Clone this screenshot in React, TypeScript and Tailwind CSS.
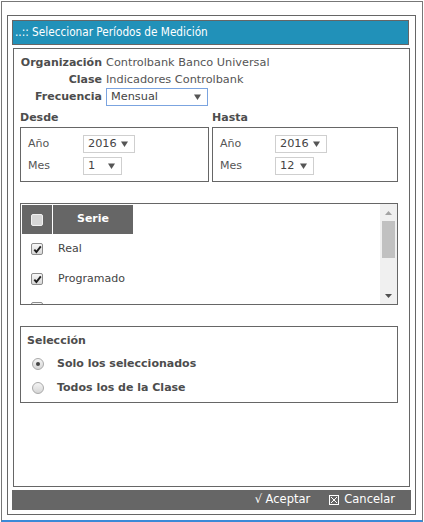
import React from 'react'

function Arrow() {
  return (
    <svg width="7" height="6" viewBox="0 0 7 6">
      <path d="M0 0.5 L7 0.5 L3.5 6 Z" fill="#555" />
    </svg>
  )
}

function Sel({ value, w }: { value: string; w: string }) {
  return (
    <div className={`${w} h-[18px] border border-[#cfcfcf] bg-white flex items-center justify-between pl-[4px] pr-[6px] text-[11.3px] text-[#444]`}>
      <span>{value}</span>
      <Arrow />
    </div>
  )
}

function Check({ checked, header }: { checked?: boolean; header?: boolean }) {
  if (header) {
    return <div className="w-[12px] h-[12px] rounded-[2px] border border-[#f0f0f0] bg-[#d6d6d6]" />
  }
  return (
    <div className="w-[12px] h-[12px] rounded-[2px] border border-[#8c8c8c] bg-gradient-to-b from-[#f7f7f7] to-[#d8d8d8] flex items-center justify-center">
      {checked && (
        <svg width="9" height="9" viewBox="0 0 9 9">
          <path d="M1.3 4.6 L3.4 7 L7.8 1.4" stroke="#1e1e1e" strokeWidth="1.9" fill="none" />
        </svg>
      )}
    </div>
  )
}

function Radio({ on }: { on?: boolean }) {
  return (
    <div className="w-[12px] h-[12px] rounded-full border border-[#a9a9a9] bg-gradient-to-b from-[#f4f4f4] to-[#d6d6d6] flex items-center justify-center">
      {on && <div className="w-[4px] h-[4px] rounded-full bg-[#444]" />}
    </div>
  )
}

function RangeBox({ label, w, year, month }: { label: string; w: string; year: string; month: string }) {
  return (
    <div className={`${w} flex flex-col`}>
      <div className="h-[17px] leading-[17px] font-bold text-[#4d4d4d]">{label}</div>
      <div className="mt-px h-[55px] border border-[#666] pt-[7px]">
        <div className="flex items-center">
          <span className="w-[62px] pl-[7px] text-[#555]">Año</span>
          <Sel value={year} w="w-[52px]" />
        </div>
        <div className="flex items-center mt-[4px]">
          <span className="w-[62px] pl-[7px] text-[#555]">Mes</span>
          <Sel value={month} w="w-[39px]" />
        </div>
      </div>
    </div>
  )
}

export default function App() {
  return (
    <div className="w-[424px] h-[522px] bg-white pt-px pl-px font-['DejaVu_Sans',Verdana,sans-serif] text-[11px]">
      <div className="w-[422px] h-[521px] border border-[#777] border-b-2 border-b-[#3a8ad8] pl-[5px] pt-[13px]">
        <div className="w-[409px] h-[500px] border border-[#666] pl-[4px] pt-[4px] flex flex-col">
          {/* titulo */}
          <div className="w-[397px] h-[25px] shrink-0 bg-[#2191b9] border border-[#666] pl-[2px] flex items-center text-white text-[11.7px] font-['DejaVu_Sans_Condensed','DejaVu_Sans',sans-serif] [font-stretch:condensed]">
            ..:: Seleccionar Períodos de Medición
          </div>

          {/* contenido */}
          <div className="ml-px mt-[3px] w-[397px] h-[439px] shrink-0 border border-[#666]">
            <div className="mt-[5px] grid grid-cols-[88px_1fr] gap-x-[4px]">
              <div className="h-[17px] leading-[17px] text-right font-bold text-[#4d4d4d]">Organización</div>
              <div className="h-[17px] leading-[17px] text-[11.3px] text-[#555]">Controlbank Banco Universal</div>
              <div className="h-[17px] leading-[17px] text-right font-bold text-[#4d4d4d]">Clase</div>
              <div className="h-[17px] leading-[17px] text-[11.3px] text-[#555]">Indicadores Controlbank</div>
              <div className="h-[18px] leading-[18px] text-right font-bold text-[#4d4d4d]">Frecuencia</div>
              <div className="w-[102px] h-[18px] border border-[#7ba4e0] flex items-center justify-between pl-[4px] pr-[6px] text-[11.3px] text-[#444]">
                <span>Mensual</span>
                <Arrow />
              </div>
            </div>

            <div className="mt-[3px] pl-[6px] flex gap-[3px]">
              <RangeBox label="Desde" w="w-[189px]" year="2016" month="1" />
              <RangeBox label="Hasta" w="w-[186px]" year="2016" month="12" />
            </div>

            {/* grilla de series */}
            <div className="mt-[21px] ml-[6px] w-[378px] h-[102px] border border-[#666] flex overflow-hidden">
              <div className="flex-1 overflow-hidden">
                <div className="mt-px ml-px flex gap-px">
                  <div className="w-[30px] h-[29px] bg-[#666] flex items-center justify-center">
                    <Check header />
                  </div>
                  <div className="w-[80px] h-[29px] bg-[#666] flex items-center justify-center font-bold text-white">
                    Serie
                  </div>
                </div>
                <div className="h-[30px] flex items-center pl-[10px]">
                  <Check checked />
                  <span className="ml-[15px] text-[#444]">Real</span>
                </div>
                <div className="h-[30px] flex items-center pl-[10px]">
                  <Check checked />
                  <span className="ml-[15px] text-[#444]">Programado</span>
                </div>
                <div className="h-[30px] flex items-start pl-[10px] pt-[8px]">
                  <Check />
                </div>
              </div>
              <div className="w-[17px] h-full bg-[#f0f0f0] flex flex-col items-center">
                <div className="h-[17px] flex items-center justify-center">
                  <svg width="7" height="4" viewBox="0 0 7 4"><path d="M0 4 L3.5 0 L7 4 Z" fill="#a3a3a3" /></svg>
                </div>
                <div className="w-[13px] h-[37px] bg-[#c1c1c1]" />
                <div className="flex-1" />
                <div className="h-[17px] flex items-center justify-center">
                  <svg width="7" height="4" viewBox="0 0 7 4"><path d="M0 0 L7 0 L3.5 4 Z" fill="#505050" /></svg>
                </div>
              </div>
            </div>

            {/* seleccion */}
            <div className="mt-[21px] ml-[6px] w-[378px] h-[77px] border border-[#666] pt-[5px]">
              <div className="h-[17px] leading-[17px] pl-[6px] font-bold text-[#4d4d4d]">Selección</div>
              <div className="mt-[3px] h-[24px] flex items-center pl-[11px]">
                <Radio on />
                <span className="ml-[13px] font-bold text-[#4d4d4d]">Solo los seleccionados</span>
              </div>
              <div className="h-[24px] flex items-center pl-[11px]">
                <Radio />
                <span className="ml-[13px] font-bold text-[#4d4d4d]">Todos los de la Clase</span>
              </div>
            </div>
          </div>

          {/* pie */}
          <div className="mt-[3px] w-[399px] h-[20px] shrink-0 bg-[#666] flex items-center justify-end gap-[19px] pr-[16px] text-white text-[11.5px]">
            <span>√ Aceptar</span>
            <span className="flex items-center gap-[5px]">
              <svg width="10" height="10" viewBox="0 0 10 10">
                <rect x="0.5" y="0.5" width="9" height="9" fill="none" stroke="#fff" strokeWidth="1" />
                <path d="M2 2 L8 8 M8 2 L2 8" stroke="#fff" strokeWidth="1" />
              </svg>
              <span>Cancelar</span>
            </span>
          </div>
        </div>
      </div>
    </div>
  )
}
